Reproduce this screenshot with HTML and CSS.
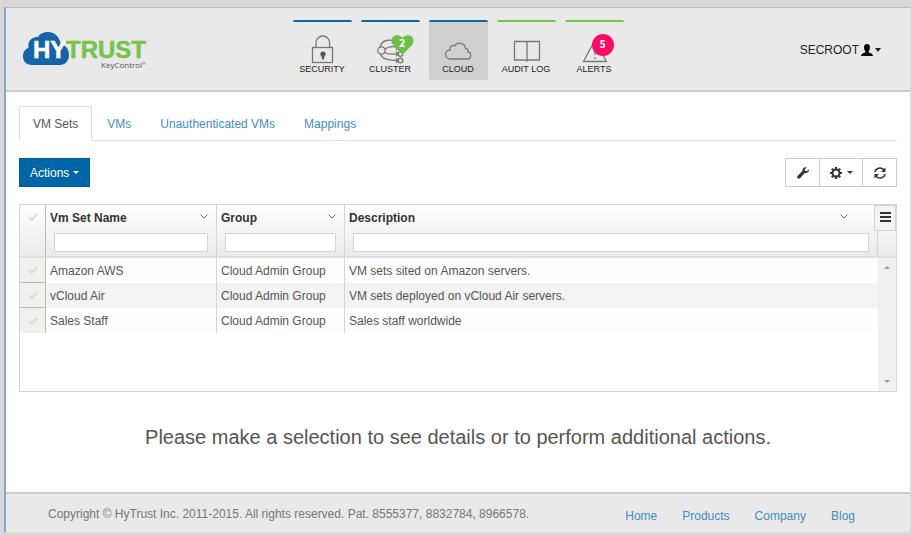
FILE: index.html
```
<!DOCTYPE html>
<html lang="en">

<head>
    <meta charset="UTF-8">
    <meta name="viewport" content="width=device-width, initial-scale=1.0">
    <title>HyTrust KeyControl</title>
    <link rel="stylesheet" href="styles.css">
</head>

<body>
    <div class="window">
        <header class="header">
            <a href="#" class="logo" aria-label="HyTrust KeyControl">
                <svg width="124" height="42" viewBox="0 0 124 42">
                    <path fill="#1763a8" d="M9 34C3 34 0 30 0 25.500C0 21 2 18 5.500 17C4.500 10 9 5.500 15 6C18 0 30-1 34 5C36 7 37.500 10 37.500 13C43 14 46 19 46 24C46 30 42 34 37 34Z" />
                    <text class="logo-hy" x="10" y="27">HY</text>
                    <text class="logo-trust" x="43" y="27">TRUST</text>
                    <text class="logo-sub" x="78" y="37">KeyControl<tspan class="logo-reg" dy="-3">®</tspan></text>
                </svg>
            </a>

            <nav class="main-nav">
                <a href="#" class="nav-item">
                    <svg class="nav-icon" viewBox="0 0 59 30">
                        <rect x="19.500" y="13.500" width="20" height="15" />
                        <path d="M23 13.500V9a6.800 7 0 0 1 13.600 0v4.500" />
                        <path class="solid" d="M30 17.500a2.600 2.600 0 0 1 1.500 4.800L30.800 25.500h-1.600L28.500 22.300A2.600 2.600 0 0 1 30 17.500z" />
                    </svg>
                    <span>SECURITY</span>
                </a>
                <a href="#" class="nav-item">
                    <svg class="nav-icon" viewBox="0 0 59 30">
                        <circle cx="20.500" cy="16.500" r="3.700" />
                        <circle cx="39.500" cy="20" r="2.300" />
                        <circle cx="39.500" cy="26.500" r="2.300" />
                        <path d="M19 13C21 5 31 4 37 10M19.500 20.200c2 4.800 7 6.300 17.500 6.300M24 15c4-3 9-3 14-1M23.500 18.500c4 2.500 8 1.500 13.500 1.500M35 17.800l2.200 2.200-2.200 2.200M35 24.300l2.200 2.200-2.200 2.200M35 11.500l3 2.500-3 2" />
                    </svg>
                    <span>CLUSTER</span>
                    <span class="badge badge-heart">
                        <svg width="23" height="20" viewBox="0 0 23 20">
                            <path fill="#6cc04a" d="M11.500 20C7 14 .5 11 .5 5.500C.5 0 8-2 11.500 3C15-2 22.500 0 22.500 5.500C22.500 11 16 14 11.500 20z" />
                        </svg>
                        <b>2</b>
                    </span>
                </a>
                <a href="#" class="nav-item active">
                    <svg class="nav-icon" viewBox="0 0 59 30">
                        <path d="M21.500 25C18 25 16.500 22.500 16.500 20.500C16.500 18 18.500 16 21 16C20.500 12.500 23.500 10.500 26 11.700C28 8 36 8 36.500 14.500C39 14.500 39.500 16.500 39 18C43 18.500 42.500 25 38.500 25Z" />
                    </svg>
                    <span>CLOUD</span>
                </a>
                <a href="#" class="nav-item green">
                    <svg class="nav-icon" viewBox="0 0 59 30">
                        <path d="M17.500 7.500h25v18.500h-11l-1.500 1-1.500-1h-11zM30 7.500v19" />
                    </svg>
                    <span>AUDIT LOG</span>
                </a>
                <a href="#" class="nav-item green">
                    <svg class="nav-icon" viewBox="0 0 59 30">
                        <path d="M30 6L41.500 27.500H18.500ZM30 12v9M30 23v2" />
                    </svg>
                    <span>ALERTS</span>
                    <span class="badge badge-alert"><b>5</b></span>
                </a>
            </nav>

            <button type="button" class="user-menu">
                SECROOT
                <svg width="12" height="12" viewBox="0 0 12 12">
                    <path d="M6 0c2 0 3 1.300 3 3.200S8.300 6.500 7.600 7.200v1C8.500 9 12 9.300 12 12H0C0 9.300 3.500 9 4.400 8.200v-1C3.700 6.500 3 5.100 3 3.200S4 0 6 0z" />
                </svg>
                <i class="caret"></i>
            </button>
        </header>

        <main class="content">
            <nav class="tabs">
                <a href="#" class="tab current">VM Sets</a>
                <a href="#" class="tab">VMs</a>
                <a href="#" class="tab">Unauthenticated VMs</a>
                <a href="#" class="tab">Mappings</a>
            </nav>

            <div class="toolbar">
                <button type="button" class="btn-actions">Actions <i class="caret"></i></button>
                <div class="btn-group">
                    <button type="button" aria-label="Tools">
                        <svg width="12" height="12" viewBox="0 0 12 12">
                            <path d="M11.800 2.500L9.800 4.300 8 3.800 7.800 2.300 9.700.4C7.800-.4 5.300.8 5.600 3.700L.6 8.900C-.8 10.600 1.300 12.600 3 11.200L7.800 6.100C10.500 6.600 12.500 4.500 11.800 2.500z" />
                        </svg>
                    </button>
                    <button type="button" aria-label="Settings">
                        <svg width="12" height="12" viewBox="0 0 12 12">
                            <circle cx="6" cy="6" r="3.500" fill="none" stroke="#333" stroke-width="2" />
                            <path stroke="#333" stroke-width="2.200" d="M6 0v2M6 10v2M0 6h2M10 6h2M1.800 1.800l1.300 1.300M8.900 8.900l1.300 1.300M10.200 1.800L8.900 3.100M3.100 8.900l-1.300 1.300" />
                        </svg>
                        <i class="caret"></i>
                    </button>
                    <button type="button" aria-label="Refresh">
                        <svg width="12" height="12" viewBox="0 0 12 12">
                            <path fill="none" stroke="#333" stroke-width="1.500" d="M1 5C1.500 1 7-.5 10 2.800M11 7C10.500 11 5 12.500 2 9.200" />
                            <path d="M11.500.500v4.500H7zM.5 11.500V7H5z" />
                        </svg>
                    </button>
                </div>
            </div>

            <div class="grid">
                <table class="vm-table">
                    <thead>
                        <tr>
                            <th class="col-check">
                                <svg class="check" viewBox="0 0 10 8"><path d="M1 4l3 3 5-6" /></svg>
                            </th>
                            <th class="col-name">
                                <div class="col-title">
                                    <label for="filterName">Vm Set Name</label>
                                    <svg class="chevron" viewBox="0 0 8 5"><path d="M.5.500L4 4 7.500.500" /></svg>
                                </div>
                                <input type="text" id="filterName">
                            </th>
                            <th class="col-group">
                                <div class="col-title">
                                    <label for="filterGroup">Group</label>
                                    <svg class="chevron" viewBox="0 0 8 5"><path d="M.5.500L4 4 7.500.500" /></svg>
                                </div>
                                <input type="text" id="filterGroup">
                            </th>
                            <th class="col-desc">
                                <div class="col-title">
                                    <label for="filterDesc">Description</label>
                                    <svg class="chevron" viewBox="0 0 8 5"><path d="M.5.500L4 4 7.500.500" /></svg>
                                </div>
                                <input type="text" id="filterDesc">
                            </th>
                        </tr>
                    </thead>
                    <tbody>
                        <tr>
                            <td class="col-check"><svg class="check" viewBox="0 0 10 8"><path d="M1 4l3 3 5-6" /></svg></td>
                            <td>Amazon AWS</td>
                            <td>Cloud Admin Group</td>
                            <td>VM sets sited on Amazon servers.</td>
                        </tr>
                        <tr>
                            <td class="col-check"><svg class="check" viewBox="0 0 10 8"><path d="M1 4l3 3 5-6" /></svg></td>
                            <td>vCloud Air</td>
                            <td>Cloud Admin Group</td>
                            <td>VM sets deployed on vCloud Air servers.</td>
                        </tr>
                        <tr>
                            <td class="col-check"><svg class="check" viewBox="0 0 10 8"><path d="M1 4l3 3 5-6" /></svg></td>
                            <td>Sales Staff</td>
                            <td>Cloud Admin Group</td>
                            <td>Sales staff worldwide</td>
                        </tr>
                    </tbody>
                </table>
                <div class="grid-side">
                    <div class="side-head">
                        <button type="button" class="grid-menu" aria-label="Grid menu">
                            <svg width="11" height="10" viewBox="0 0 11 10"><path d="M0 0h11v2H0zM0 4h11v2H0zM0 8h11v2H0z" /></svg>
                        </button>
                    </div>
                    <div class="scrollbar">
                        <i class="arrow-up"></i>
                        <i class="arrow-down"></i>
                    </div>
                </div>
            </div>

            <p class="message">Please make a selection to see details or to perform additional actions.</p>
        </main>

        <footer class="footer">
            <p>Copyright © HyTrust Inc. 2011-2015. All rights reserved. Pat. 8555377, 8832784, 8966578.</p>
            <nav class="footer-links">
                <a href="#">Home</a>
                <a href="#">Products</a>
                <a href="#">Company</a>
                <a href="#">Blog</a>
            </nav>
        </footer>
    </div>
</body>

</html>
```
FILE: styles.css
```
/* General Styles */
* {
    box-sizing: border-box;
}

body {
    font-family: "Liberation Sans", Arial, sans-serif;
    font-size: 12px;
    line-height: 16px;
    color: #555;
    background-color: #d8d8d8;
    margin: 0;
    padding: 7px 2px 3px 4px;
}

a {
    color: #428bca;
    text-decoration: none;
}

button {
    font: inherit;
    cursor: pointer;
}

.window {
    display: flex;
    flex-direction: column;
    min-height: calc(100vh - 10px);
    background: #fff;
    border-top: 1px solid #bbb;
    border-left: 2px solid #86a5c8;
}

.caret {
    display: inline-block;
    border-top: 4px solid;
    border-left: 4px solid transparent;
    border-right: 4px solid transparent;
}

/* Header Styles */
.header {
    display: grid;
    grid-template-columns: 1fr auto 1fr;
    align-items: center;
    height: 84px;
    padding: 2px 29px 0 17px;
    column-gap: 10px;
    background: #e9e9e9;
    border-bottom: 2px solid #ccc;
}

.logo svg {
    display: block;
    margin-top: 4px;
}

.logo-hy,
.logo-trust {
    font-size: 24px;
    font-weight: bold;
    fill: #fff;
    stroke: #fff;
    stroke-width: 0.5;
}

.logo-trust {
    fill: #76c44c;
    stroke: #76c44c;
}

.logo-sub {
    font-family: "Open Sans", sans-serif;
    font-size: 8px;
    fill: #555;
}

.logo-reg {
    font-size: 4px;
}

.main-nav {
    display: flex;
    gap: 9px;
    margin-left: 12px;
}

.nav-item {
    position: relative;
    display: flex;
    flex-direction: column;
    align-items: center;
    width: 59px;
    height: 60px;
    padding-top: 12px;
    border-top: 2px solid #0a67a8;
    border-radius: 2px;
    color: #222;
    font-size: 9px;
    line-height: 11px;
    white-space: nowrap;
}

.nav-item.green {
    border-color: #76c44c;
}

.nav-item.active {
    background: #d0d0d0;
}

.nav-icon {
    width: 59px;
    height: 30px;
    fill: none;
    stroke: #777;
    stroke-width: 1.3;
}

.nav-icon .solid {
    fill: #555;
    stroke: none;
}

.badge {
    position: absolute;
    display: flex;
    justify-content: center;
    color: #fff;
    font-family: "Open Sans", sans-serif;
    font-size: 10px;
    line-height: 16px;
}

.badge-heart {
    top: 13px;
    left: 30px;
    width: 23px;
}

.badge-heart b {
    position: absolute;
    top: 0;
}

.badge-alert {
    top: 12px;
    left: 27px;
    width: 22px;
    height: 22px;
    line-height: 20px;
    border-radius: 50%;
    background: #ff0a64;
}

.user-menu {
    display: flex;
    align-items: center;
    justify-self: end;
    gap: 2px;
    padding: 0;
    border: 0;
    background: none;
    color: #222;
}

.user-menu svg {
    fill: #000;
}

.user-menu .caret {
    border-width: 4px 3px 0;
}

/* Tabs */
.content {
    flex: 1;
    padding: 14px 13px 0 13px;
}

.tabs {
    display: flex;
    gap: 1px;
    border-bottom: 1px solid #ddd;
}

.tab {
    height: 34px;
    padding: 9px 13px;
    border: 1px solid transparent;
    border-bottom: 0;
}

.tab.current {
    margin-bottom: -1px;
    height: 35px;
    background: #fff;
    border-color: #ddd;
    color: #555;
}

/* Toolbar */
.toolbar {
    display: flex;
    justify-content: space-between;
    margin: 17px 0;
}

.btn-actions {
    display: flex;
    align-items: center;
    gap: 4px;
    height: 29px;
    padding: 0 10px;
    border: 1px solid #005a96;
    background: #0066a8;
    color: #fff;
}

.btn-actions .caret,
.btn-group .caret {
    border-width: 3px;
    border-bottom: 0;
}

.btn-group {
    display: flex;
}

.btn-group button {
    display: flex;
    align-items: center;
    justify-content: center;
    gap: 5px;
    width: 35px;
    height: 29px;
    padding: 0;
    border: 1px solid #ccc;
    background: #fff;
    color: #333;
    fill: #333;
}

.btn-group button + button {
    margin-left: -1px;
}

.btn-group button:nth-child(2) {
    width: 44px;
}

/* VM Sets table */
.grid {
    display: flex;
    min-height: 188px;
    border: 1px solid #d4d4d4;
}

.vm-table {
    flex: 1;
    align-self: flex-start;
    width: 0;
    table-layout: fixed;
    border-collapse: separate;
    border-spacing: 0;
}

.vm-table th {
    height: 53px;
    padding: 0;
    text-align: left;
    vertical-align: top;
    color: #333;
    background: linear-gradient(#fff, #eaeaea);
    border-right: 1px solid #d4d4d4;
    border-bottom: 2px solid #e0e0e0;
}

.vm-table td {
    height: 25px;
    padding: 0 4px;
    border-right: 1px solid #d4d4d4;
    background: #fdfdfd;
}

.vm-table tr:nth-child(even) td {
    background: #f3f3f3;
}

.vm-table td:last-child {
    border-right: 0;
}

.vm-table .col-check {
    width: 26px;
    text-align: center;
    border-right-color: #bbb;
}

.vm-table td.col-check,
.vm-table tr:nth-child(even) td.col-check {
    background: #f0f0ee;
    border-bottom: 1px solid #bbb;
}

.vm-table tr:last-child td.col-check {
    border-bottom: 0;
}

.col-name {
    width: 171px;
}

.col-group {
    width: 128px;
}

.check {
    width: 10px;
    height: 8px;
    fill: none;
    stroke: #ddd;
    stroke-width: 2;
}

th .check {
    margin-top: 8px;
}

.col-title {
    display: flex;
    align-items: center;
    justify-content: space-between;
    height: 26px;
    padding: 0 8px 0 4px;
}

.col-desc .col-title {
    padding-right: 29px;
}

.chevron {
    width: 8px;
    height: 5px;
    margin-bottom: 4px;
    fill: none;
    stroke: #666;
}

.vm-table input {
    display: block;
    width: calc(100% - 16px);
    height: 19px;
    margin: 2px 8px 0;
    padding: 0 4px;
    border: 1px solid #d4d4d4;
    background: #fff;
    font: inherit;
}

.grid-side {
    display: flex;
    flex-direction: column;
    width: 18px;
}

.side-head {
    position: relative;
    height: 53px;
    background: linear-gradient(#fff, #eaeaea);
    border-bottom: 2px solid #e0e0e0;
}

.grid-menu {
    position: absolute;
    top: 0;
    right: 0;
    width: 22px;
    height: 26px;
    padding: 0;
    border: 1px solid #d4d4d4;
    background: #f3f3f3;
    fill: #333;
}

.scrollbar {
    display: flex;
    flex: 1;
    flex-direction: column;
    align-items: center;
    justify-content: space-between;
    padding: 8px 0;
    background: #f0f0f0;
}

.arrow-up,
.arrow-down {
    border: 3px solid transparent;
    border-top: 0;
    border-bottom-color: #999;
}

.arrow-down {
    border-top: 3px solid #999;
    border-bottom: 0;
}

.message {
    margin: 32px 0;
    font-size: 20px;
    line-height: 26px;
    text-align: center;
}

/* Footer */
.footer {
    display: flex;
    flex-wrap: wrap;
    justify-content: space-between;
    padding: 12px 55px 8px 42px;
    background: #e9e9e9;
    border-top: 2px solid #ccc;
    color: #777;
}

.footer p {
    margin: 0;
}

.footer-links {
    display: flex;
    gap: 25px;
    padding-top: 2px;
}
```
